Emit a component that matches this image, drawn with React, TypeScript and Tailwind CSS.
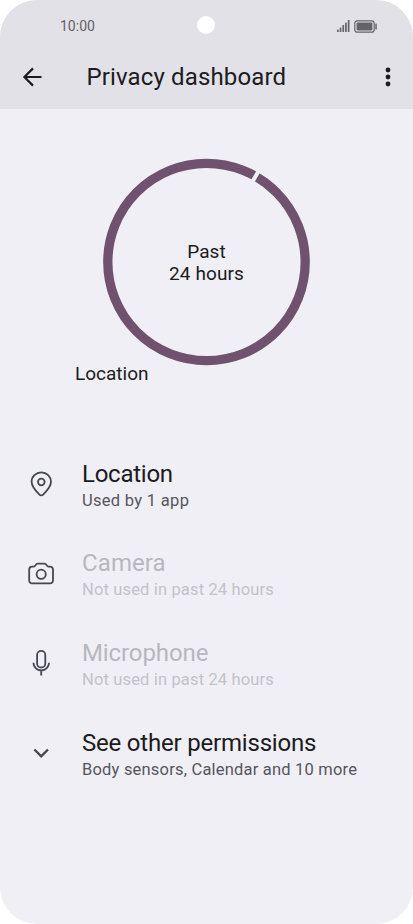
import type { ReactNode } from "react";

interface Permission {
  name: string;
  summary: string;
  icon: ReactNode;
  muted?: boolean;
  nameClass: string;
  summaryClass: string;
}

function LocationIcon() {
  return (
    <svg width="32" height="32" viewBox="0 0 32 32" fill="none" stroke="currentColor" strokeWidth="1.8" strokeLinejoin="round">
      <path d="M16.3 27.4c-.9 0-1.5-.5-2.1-1.1-3.6-3.5-7.6-7.4-7.6-12.5a9.7 9.5 0 0 1 19.4 0c0 5.1-4 9-7.6 12.5-.6.6-1.2 1.1-2.1 1.1Z" />
      <circle cx="16.3" cy="14" r="3.3" />
    </svg>
  );
}

function CameraIcon() {
  return (
    <svg width="32" height="32" viewBox="0 0 32 32" fill="none" stroke="currentColor" strokeWidth="1.8" strokeLinejoin="round">
      <path d="M4.2 12.6a3 3 0 0 1 3-3h1.3c1 0 1.6-.6 2.1-1.5.5-.9 1.2-1.4 2.2-1.4h6.6c1 0 1.7.5 2.2 1.4.5.9 1.1 1.5 2.1 1.5H25a3 3 0 0 1 3 3v10.8a3 3 0 0 1-3 3H7.2a3 3 0 0 1-3-3Z" />
      <circle cx="16.2" cy="17.3" r="4.6" />
    </svg>
  );
}

function MicIcon() {
  return (
    <svg width="32" height="32" viewBox="0 0 32 32" fill="none" stroke="currentColor" strokeWidth="1.8">
      <rect x="12.1" y="3.9" width="8.2" height="16.6" rx="4.1" />
      <path d="M8.4 15.7a7.8 7.8 0 0 0 15.6 0M16.2 23.5v5" />
    </svg>
  );
}

function ChevronIcon() {
  return (
    <svg width="32" height="32" viewBox="0 0 32 32" fill="none" stroke="currentColor" strokeWidth="2.4">
      <path d="m9.4 12.5 6.8 6.8 6.8-6.8" />
    </svg>
  );
}

const permissions: Permission[] = [
  {
    name: "Location",
    summary: "Used by 1 app",
    icon: <LocationIcon />,
    nameClass: "tracking-[-0.25px]",
    summaryClass: "tracking-[0.3px]",
  },
  {
    name: "Camera",
    summary: "Not used in past 24 hours",
    icon: <CameraIcon />,
    muted: true,
    nameClass: "tracking-[0.1px]",
    summaryClass: "tracking-[0.15px]",
  },
  {
    name: "Microphone",
    summary: "Not used in past 24 hours",
    icon: <MicIcon />,
    muted: true,
    nameClass: "tracking-[-0.1px]",
    summaryClass: "tracking-[0.15px]",
  },
  {
    name: "See other permissions",
    summary: "Body sensors, Calendar and 10 more",
    icon: <ChevronIcon />,
    nameClass: "tracking-[-0.2px]",
    summaryClass: "tracking-[0.2px]",
  },
];

function StatusBar() {
  return (
    <div className="grid h-[50px] grid-cols-[197px_18px_1fr] items-center text-[#636267]">
      <span className="pl-[60px] pt-0.5 text-sm leading-none">10:00</span>
      <span className="size-[18px] rounded-full bg-white" />
      <div className="flex items-center justify-end gap-[3px] pr-[35px] pt-0.5">
        <svg width="15" height="12" viewBox="0 0 15 12" fill="currentColor">
          <rect x="1" y="9.5" width="1.7" height="2.5" rx=".5" />
          <rect x="3.7" y="7.5" width="1.7" height="4.5" rx=".5" />
          <rect x="6.4" y="5" width="1.7" height="7" rx=".5" />
          <rect x="9.1" y="2.5" width="1.7" height="9.5" rx=".5" />
          <rect x="11.8" y="0" width="1.7" height="12" rx=".5" />
        </svg>
        <svg width="24" height="13" viewBox="0 0 24 13" fill="none">
          <rect x=".8" y=".8" width="19.4" height="11.4" rx="2.5" stroke="currentColor" strokeWidth="1.2" />
          <rect x="2.6" y="2.5" width="15.8" height="8" rx="1" fill="currentColor" />
          <rect x="21.3" y="3.5" width="1.5" height="6" rx=".6" fill="currentColor" />
        </svg>
      </div>
    </div>
  );
}

function Header() {
  return (
    <header className="h-[109px] bg-[#e2e1e8]">
      <StatusBar />
      <div className="flex h-[54px] items-center pl-[21px] pr-[15px]">
        <svg width="22" height="22" viewBox="0 0 22 22" fill="none" stroke="#1b1b20" strokeWidth="2.2">
          <path d="M20.5 11H3.5M12 2.4 3.4 11l8.600 8.600" />
        </svg>
        <h1 className="ml-[43.5px] flex-1 text-2xl tracking-[0.14px]">Privacy dashboard</h1>
        <svg width="20" height="22" viewBox="0 0 20 22" fill="#1b1b20">
          <circle cx="10" cy="4" r="2.4" />
          <circle cx="10" cy="11" r="2.4" />
          <circle cx="10" cy="18" r="2.4" />
        </svg>
      </div>
    </header>
  );
}

function UsageRing() {
  return (
    <div className="mt-[49px] flex flex-col">
      <div className="grid place-items-center self-center">
        <svg width="208" height="208" viewBox="0 0 208 208" fill="none" className="col-start-1 row-start-1">
          <circle cx="103.5" cy="104" r="98.7" stroke="#70526e" strokeWidth="9.3" />
          <path d="M103.5 11V-1" stroke="#f0eff6" strokeWidth="4" transform="rotate(29.8 103.5 104)" />
        </svg>
        <p className="col-start-1 row-start-1 pt-0.5 text-center text-[19px] leading-[22px] tracking-[0.1px]">
          Past
          <br />
          24 hours
        </p>
      </div>
      <span className="-mt-[3px] ml-[75px] text-[19px] leading-[22px]">Location</span>
    </div>
  );
}

function PermissionRow({ name, summary, icon, muted, nameClass, summaryClass }: Permission) {
  return (
    <li className="flex h-[89.6px] items-center gap-[25px] pl-[25px]">
      <span className="pb-1 text-[#46464f]">{icon}</span>
      <div className="whitespace-nowrap">
        <p className={`text-2xl leading-7 ${nameClass} ${muted ? "text-[#b8b7bd]" : "text-[#1b1b20]"}`}>{name}</p>
        <p className={`-mb-px pt-px text-[16.5px] leading-6 ${summaryClass} ${muted ? "text-[#c3c2c9]" : "text-[#56555d]"}`}>
          {summary}
        </p>
      </div>
    </li>
  );
}

export default function App() {
  return (
    <main className="h-[924px] w-[413px] overflow-hidden rounded-[37px] bg-[#f0eff6] font-['Roboto',sans-serif] text-[#1b1b20]">
      <Header />
      <UsageRing />
      <ul className="mt-[56px]">
        {permissions.map((p) => (
          <PermissionRow key={p.name} {...p} />
        ))}
      </ul>
    </main>
  );
}
